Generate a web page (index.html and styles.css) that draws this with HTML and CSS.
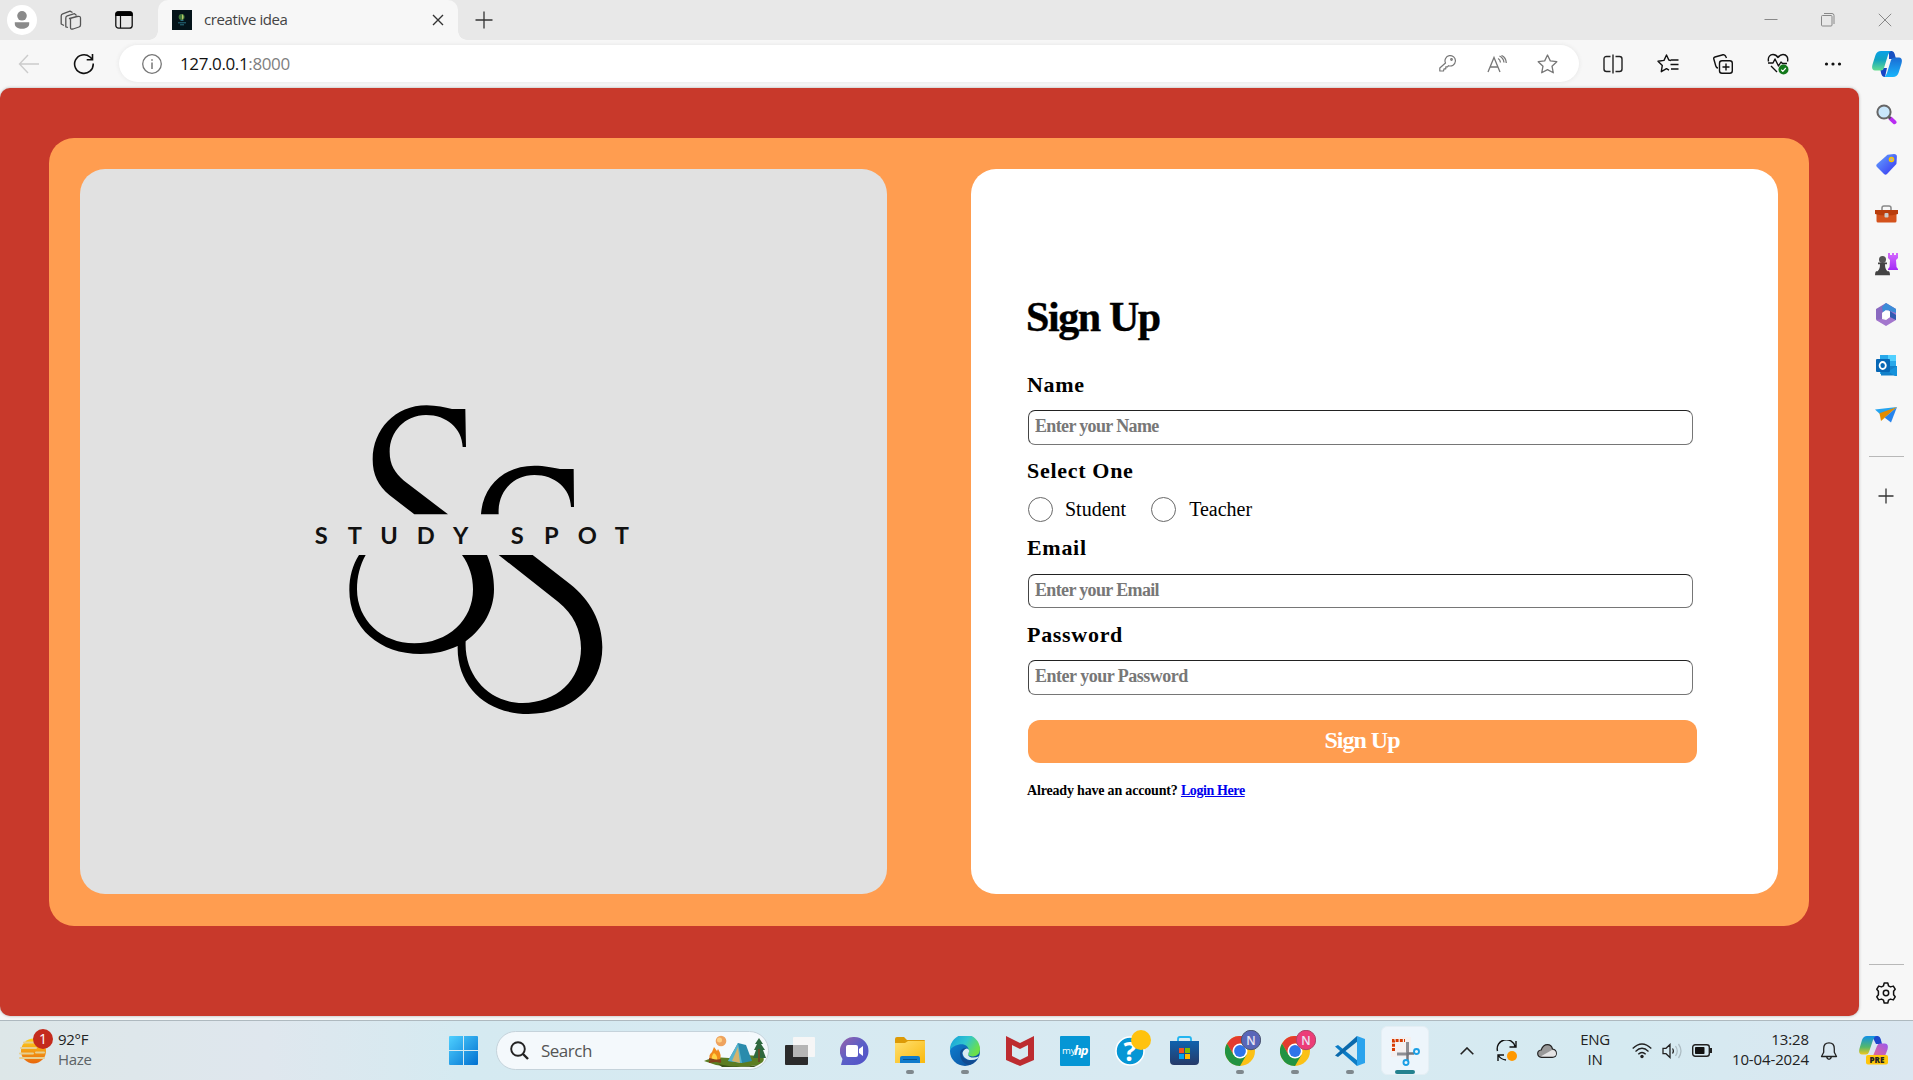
FILE: index.html
```html
<!DOCTYPE html>
<html lang="en">
<head>
<meta charset="utf-8">
<title>creative idea</title>
<link rel="stylesheet" href="styles.css">
</head>
<body>
<svg class="defs" width="0" height="0" aria-hidden="true">
  <defs>
    <linearGradient id="gWin" x1="0" y1="0" x2="1" y2="1"><stop offset="0" stop-color="#4fd0ff"/><stop offset="1" stop-color="#0070d0"/></linearGradient>
    <linearGradient id="gTag" x1="0" y1="0" x2="1" y2="1"><stop offset="0" stop-color="#66a8ff"/><stop offset="1" stop-color="#3630f0"/></linearGradient>
    <linearGradient id="gBag" x1="0" y1="0" x2="0" y2="1"><stop offset="0" stop-color="#0f62ae"/><stop offset="1" stop-color="#263a68"/></linearGradient>
    <linearGradient id="gChat" x1="0" y1="0" x2="1" y2="1"><stop offset="0" stop-color="#9a62a8"/><stop offset=".5" stop-color="#5b5fc7"/><stop offset="1" stop-color="#5050c8"/></linearGradient>
    <linearGradient id="gFold" x1="0" y1="0" x2="1" y2="1"><stop offset="0" stop-color="#ffdf70"/><stop offset="1" stop-color="#fab90c"/></linearGradient>
    <linearGradient id="gEdgeTop" x1="0" y1="0" x2="1" y2=".5"><stop offset="0" stop-color="#139ddb"/><stop offset=".55" stop-color="#30c5cf"/><stop offset="1" stop-color="#6be04a"/></linearGradient>
    <linearGradient id="gEdge" x1="0" y1="0" x2="1" y2="1"><stop offset="0" stop-color="#0e86d8"/><stop offset="1" stop-color="#0c4a96"/></linearGradient>
    <linearGradient id="gHaze" x1="0" y1="0" x2="0" y2="1"><stop offset="0" stop-color="#ffd21a"/><stop offset="1" stop-color="#e8650c"/></linearGradient>
    <linearGradient id="gCopA" x1="0" y1="0" x2="0" y2="1"><stop offset="0" stop-color="#08a0e8"/><stop offset=".45" stop-color="#12a3c0"/><stop offset="1" stop-color="#65dd90"/></linearGradient>
    <linearGradient id="gCopB" x1="0" y1="0" x2="0" y2="1"><stop offset="0" stop-color="#1b6bd4"/><stop offset="1" stop-color="#18b5fb"/></linearGradient>
    <linearGradient id="gPreA" x1="0" y1="0" x2="0" y2="1"><stop offset="0" stop-color="#1090e8"/><stop offset=".6" stop-color="#55b86a"/><stop offset="1" stop-color="#f0c71c"/></linearGradient>
    <linearGradient id="gPreB" x1="1" y1="0" x2="0" y2="1"><stop offset="0" stop-color="#9958f0"/><stop offset="1" stop-color="#fa6b77"/></linearGradient>
    <linearGradient id="gRook" x1="0" y1="0" x2="0" y2="1"><stop offset="0" stop-color="#d56bff"/><stop offset="1" stop-color="#a32bf5"/></linearGradient>
    <symbol id="chrome" viewBox="0 0 30 30">
      <circle cx="15" cy="15" r="15" fill="#fbc116"/>
      <path d="M2 7.500A15 15 0 0 1 28 7.500H15L8.500 18.750Z" fill="#e33b2e"/>
      <path d="M2 7.500A15 15 0 0 0 15 30L21.500 18.750 15 15 8.500 18.750Z" fill="#229342"/>
      <circle cx="15" cy="15" r="7.500" fill="#fff"/><circle cx="15" cy="15" r="5.900" fill="#2f74ea"/>
    </symbol>
  </defs>
</svg>

<div class="screen">
  <header class="tabstrip">
    <div class="slot avatar-slot"><svg width="30" height="30" viewBox="0 0 30 30"><circle cx="15" cy="15" r="15" fill="#fff"/><circle cx="15" cy="10.800" r="4.800" fill="#8a8a8a"/><path d="M7.800 17.300h14.400v1.500c0 3.400-3.400 5-7.200 5s-7.200-1.600-7.200-5z" fill="#8a8a8a"/></svg></div>
    <div class="slot spaces"><svg width="22" height="20" viewBox="0 0 22 20" fill="none" stroke="#555" stroke-width="1.300" stroke-linejoin="round"><path d="M9.500 8.500 17 6.500q3.500-.8 3.500 1.500V15q0 1.500-1.500 2l-6 2q-2.500.700-2.500-1.500V9.500q0-1 .8-1.400z"/><path d="M8 17.500 5.800 16.800V8q0-1.600 1.500-2.200L14.500 3.600 16.500 5.500"/><path d="M4 15.500 1.200 14V6q0-1.600 1.500-2.200L10 1.200 12.500 2.500"/></svg></div>
    <div class="slot"><svg width="18" height="18" viewBox="0 0 18 18"><rect x=".8" y=".8" width="16.400" height="16.400" rx="2.800" fill="none" stroke="#111" stroke-width="1.300"/><path d="M.3 5V3q0-2.700 2.700-2.700h12q2.700 0 2.700 2.700v2z" fill="#000"/><path d="M5.500 5v12" stroke="#111" stroke-width="1.200"/></svg></div>
    <div class="tab">
      <svg width="20" height="20" viewBox="0 0 20 20"><path fill="#04141a" d="M0 0h20v20H0z"/><circle cx="9.600" cy="7" r="3" fill="#41793d"/><path d="M10 4q3 3 0 6z" fill="#bcc96a"/><path d="M8.500 10.500h3M6 12.800h8M8 14.800h4" stroke="#287082"/></svg>
      <span class="tab-title">creative idea</span>
      <svg width="12" height="12" viewBox="0 0 12 12" stroke="#333" stroke-width="1.400"><path d="m1 1 10 10M11 1 1 11"/></svg>
    </div>
    <div class="slot newtab"><svg width="18" height="18" viewBox="0 0 18 18" stroke="#333" stroke-width="1.300"><path d="M9 .5v17M.5 9h17"/></svg></div>
    <div class="winbtns">
      <svg width="14" height="14" viewBox="0 0 14 14" stroke="#888" fill="none"><path d="M.5 6.500h13"/></svg>
      <svg width="14" height="14" viewBox="0 0 14 14" stroke="#888" fill="none"><rect x=".5" y="2.500" width="10.500" height="10.500" rx="1"/><path d="M3 .5h8q2 0 2 2v8.500"/></svg>
      <svg width="14" height="14" viewBox="0 0 14 14" stroke="#888" fill="none"><path d="m.8.800 12.400 12.400M13.200.8.800 13.200"/></svg>
    </div>
  </header>

  <nav class="toolbar">
    <div class="nav-slot"><svg width="22" height="20" viewBox="0 0 22 20" fill="none" stroke="#ccc" stroke-width="1.400"><path d="M21 10H1.500M10 1 1.500 10 10 19"/></svg></div>
    <div class="nav-slot reload"><svg width="22" height="22" viewBox="0 0 22 22" fill="none" stroke="#111" stroke-width="1.600"><path d="M20.200 10.500A9.300 9.300 0 1 1 17 4l2.500 2.500M19.500 1v5.700h-5.800"/></svg></div>
    <div class="address">
      <svg width="20" height="20" viewBox="0 0 20 20" fill="none" stroke="#767676"><circle cx="10" cy="10" r="9.300" stroke-width="1.300"/><path d="M10 8.500V15" stroke-width="1.500"/><circle cx="10" cy="6" r=".5"/></svg>
      <span class="url">127.0.0.1<span>:8000</span></span>
      <div class="addr-icons">
        <svg width="17" height="17" viewBox="0 0 17 17" fill="none" stroke="#777" stroke-width="1.200" stroke-linejoin="round"><path d="M6.500 8A5.200 5.200 0 1 1 9.500 10.700L8.500 11.800H6.800v2H5L4.500 16H.8v-3z"/><circle cx="12.500" cy="4.500" r=".8"/></svg>
        <svg width="20" height="18" viewBox="0 0 20 18" fill="none" stroke="#777" stroke-width="1.300"><path d="M1 17 7 2.500 13 17M3.200 12h7.600M11 3.500q2.200 1 2.500 4M12.500 1Q16.500 3 17 7.500M14.500.5Q19 2.500 19.300 8"/></svg>
        <svg width="21" height="20" viewBox="0 0 21 20" fill="none" stroke="#777" stroke-width="1.300" stroke-linejoin="round"><path d="m10.500 1 2.800 5.900 6.500.8-4.800 4.500 1.300 6.600-5.800-3.200-5.800 3.200L6 12.200 1.200 7.700l6.500-.8z"/></svg>
      </div>
    </div>
    <div class="actions">
      <svg width="20" height="20" viewBox="0 0 20 20" fill="none" stroke="#222" stroke-width="1.400"><path d="M10 .5v19M7.500 2.500h-4Q1 2.500 1 5v10q0 2.500 2.500 2.500h4M12.500 2.500h4Q19 2.500 19 5v10q0 2.500-2.500 2.500h-4"/></svg>
      <svg width="22" height="20" viewBox="0 0 22 20" fill="none" stroke="#111" stroke-width="1.400" stroke-linejoin="round"><path d="M14 6.500 11.800 6 9.500 1 7 6.400 1 7.200l4.300 4.200-1 6.300 5.200-3 2.500 1.400M14 6h7.500M13.500 10.500h8M14 15h7.500" /></svg>
      <svg width="20" height="20" viewBox="0 0 20 20" fill="none" stroke="#111" stroke-width="1.400"><rect x="6.500" y="6.700" width="12.800" height="12.500" rx="2.500"/><path d="M13 9.500v7M9.500 13h7M13.500 4 12.500 2Q11.500.5 10 .8L2 3Q.4 3.500.8 5l2 7q.6 2 2.200 2"/></svg>
      <svg width="22" height="22" viewBox="0 0 22 22" fill="none" stroke="#111" stroke-width="1.400" stroke-linejoin="round"><path d="M1.500 8.500C.5 3.500 3.500 1.500 6 1.500q3 0 5 3 2-3 5-3c3.500 0 5.500 3 4.500 7M1 10h5l2-4 3.500 7 2.500-4 1.500 1.500H20M4 13l6 6"/><circle cx="16.500" cy="16.500" r="5" fill="#13791b" stroke="none"/><path d="m14.200 16.700 1.600 1.600 3-3.300" stroke="#fff" stroke-width="1.200"/></svg>
      <svg width="18" height="6" viewBox="0 0 18 6" fill="#111"><circle cx="2.500" cy="3" r="1.600"/><circle cx="9" cy="3" r="1.600"/><circle cx="15.500" cy="3" r="1.600"/></svg>
    </div>
    <div class="copilot"><svg width="30" height="26" viewBox="0 0 30 26"><path d="M17 0h3q2 .3 2.700 3L24 8h-7z" fill="#174fc1"/><path d="M8 17h7l-2 9h-1q-2-.5-2.700-3z" fill="#1744c5"/><path d="M9 0h10q-2 .8-3 4l-4 13q-.8 2.500-3 2.500H3Q-1 19 .5 13.500L3.500 4Q5 0 9 0z" fill="url(#gCopA)"/><path d="M21 26H12q2-1 3-4l4-13q.8-2.500 3-2.500h5q4 .5 2.500 6L26.500 22Q25 26 21 26z" fill="url(#gCopB)"/></svg></div>
  </nav>

  <div class="viewport">
    <main class="page">
      <section class="card">
        <div class="brand">
          <svg width="350" height="340" viewBox="0 0 1050 1020">
            <path d="M343 373 268 315C235 288 218 255 218 208C218 120 285 46 380 46C410 46 435 53 456 57H496L498 171H488C486 115 440 75 378 75C315 75 269 125 269 185C269 225 285 248 312 272L444 373Z"/>
            <path d="M543 373C548 290 610 227 703 227C735 227 760 233 780 237H821L822 351H813C811 295 765 255 703 255C640 255 592 305 596 373Z"/>
            <path d="M177 495H197C180 525 171 560 171 598C171 690 245 760 343 760C445 760 519 690 519 598C519 560 508 525 486 495H561C575 530 582 560 582 598C582 660 550 715 497 754C492 860 570 939 668 939C770 939 843 870 843 775C843 720 820 672 775 636L596 495H698L810 582C870 630 907 695 907 772C907 890 810 972 685 972C560 972 470 890 473 768C440 783 405 792 362 792C240 792 148 715 148 600C148 560 158 525 177 495Z"/>
            <text class="brand-text" y="462" x="44 143 241 350 459 632 732 833 944"><tspan>STUDY</tspan></text>
            <text class="brand-text" y="462" x="632 732 833 944">SPOT</text>
          </svg>
        </div>
        <form class="signup">
          <h1>Sign Up</h1>
          <label class="field-label" for="name">Name</label>
          <input class="field" id="name" placeholder="Enter your Name">
          <span class="field-label">Select One</span>
          <div class="radios">
            <label><input type="radio" name="role"><span>Student</span></label>
            <label><input type="radio" name="role"><span>Teacher</span></label>
          </div>
          <label class="field-label" for="email">Email</label>
          <input class="field field-email" id="email" placeholder="Enter your Email">
          <label class="field-label" for="password">Password</label>
          <input class="field field-password" id="password" type="password" placeholder="Enter your Password">
          <button class="submit" type="button">Sign Up</button>
          <p class="login">Already have an account? <a href="#">Login Here</a></p>
        </form>
      </section>
    </main>
    <aside class="sidebar">
      <div class="side-icon"><svg width="21" height="21" viewBox="0 0 21 21"><path d="m14.500 14.500 4 3.700" stroke="#b92cf2" stroke-width="4" stroke-linecap="round"/><path d="m12.500 12.500 2 2" stroke="#555" stroke-width="2.500"/><circle cx="8" cy="8" r="6.600" fill="#c8e6fb" stroke="#666" stroke-width="2"/></svg></div>
      <div class="side-icon"><svg width="21" height="21" viewBox="0 0 21 21"><path d="M11.500.8 18 0q3 0 2.900 3l-.5 7L11 20q-1.500 1.300-3 0L1 13q-1.500-1.500 0-3z" fill="url(#gTag)"/><circle cx="15.500" cy="5.500" r="2" fill="#aac" stroke="#f9c600" stroke-width="1.600"/></svg></div>
      <div class="side-icon"><svg width="23" height="18" viewBox="0 0 23 18"><path d="M7 5V3q0-2 2-2h5q2 0 2 2v2" fill="none" stroke="#888" stroke-width="1.500"/><rect x="1.500" y="6" width="20" height="11.500" rx="1.500" fill="#d4521c"/><path d="M0 5h23v4q-11.500 3-23 0z" fill="#b93d0c"/><rect x="9.500" y="8" width="4" height="4.500" rx="1" fill="#ccc"/></svg></div>
      <div class="side-icon"><svg width="23" height="23" viewBox="0 0 23 23"><path d="M13 0h2v2h2V0h2v2h2V0h2v5l-2 2 .5 7 1.500 2v1H13v-1l1.500-2 .5-7-2-2z" fill="url(#gRook)"/><circle cx="7.500" cy="6.500" r="3.500" fill="#555"/><path d="M3 9.500h9v1.800h-2q0 5 2.500 7H14q1 1 1 4H0q0-3 1-4h1.500q2.500-2 2.500-7H3z" fill="#444"/></svg></div>
      <div class="side-icon"><svg width="22" height="23" viewBox="0 0 22 23"><path d="m11 0 10 6v6l-8-5-6 3v10l-6-3.500V6z" fill="#8a6ac0"/><path d="m11 0 10 6v6l-8-5-5 2.500L7 4z" fill="#3b8cd8"/><path d="M21 10v7l-10 6-10-6 6-1 4 1 4-3V8z" fill="#a376cd"/><path d="m15 8 6 4v5l-6-3z" fill="#325bb1"/><path d="m11 7 4 2.500v4.500l-4 2.500L7.500 14V9.500z" fill="#fff"/></svg></div>
      <div class="side-icon"><svg width="21" height="21" viewBox="0 0 21 21"><path d="M4 0h16v19H4z" fill="#28a8ea"/><path d="M12 0h8v6h-8z" fill="#51d0ff"/><path d="M5 11h16v9.500H5z" fill="#1380c9"/><path d="m21 11-9 5.500L19 21h2z" fill="#1592dc"/><rect y="4" width="14" height="13" rx="1" fill="#0767b5"/><ellipse cx="6.700" cy="10.500" rx="3.100" ry="3.500" fill="none" stroke="#fff" stroke-width="1.800"/></svg></div>
      <div class="side-icon"><svg width="22" height="16" viewBox="0 0 22 16"><path d="M22 0 0 2.500 6 8z" fill="#25a4f0"/><path d="M22 0 4.500 6.200 6 14z" fill="#e28b00"/><path d="m22 0-6 15.500-6.500-5z" fill="#2583ed"/><path d="m22 0-16 14 3.500-3.500z" fill="#ffb829"/></svg></div>
      <hr class="side-rule">
      <div class="side-plus"><svg width="16" height="16" viewBox="0 0 16 16" stroke="#333" stroke-width="1.300"><path d="M8 .5v15M.5 8h15"/></svg></div>
      <hr class="side-rule side-rule-bottom">
      <div class="side-gear"><svg width="22" height="22" viewBox="0 0 22 22" fill="none" stroke="#111" stroke-width="1.500" stroke-linejoin="round"><path d="M9.200 1h3.600l.7 2.800 2 1.100 2.800-.8 1.900 3.100-1.600 2.100v3.400l1.600 2.100-1.900 3.100-2.800-.8-2 1.100-.7 2.800H9.200l-.7-2.800-2-1.100-2.800.8-1.900-3.100 1.600-2.100V9.300L1.800 7.200l1.900-3.100 2.800.8 2-1.100z"/><circle cx="11" cy="11" r="2.700"/></svg></div>
    </aside>
  </div>

  <footer class="taskbar">
    <div class="weather">
      <svg width="36" height="36" viewBox="0 0 36 36"><circle cx="16.500" cy="22" r="12.500" fill="url(#gHaze)"/><path d="M7 13.500h11M4 19h15M3 24.500h13M3 29h24M19 23.500h8" stroke="#e6cf90" stroke-width="2" stroke-linecap="round"/><circle cx="26" cy="10" r="10" fill="#c42b1c"/><text x="26" y="15" class="badge-text">1</text></svg>
      <div class="weather-text"><span>92°F</span><span class="muted">Haze</span></div>
    </div>
    <svg class="start" width="29" height="29" viewBox="0 0 29 29"><path d="M0 1q0-1 1-1h13v14H0zM15 0h13q1 0 1 1v13H15zM0 15h14v14H1q-1 0-1-1zM15 15h14v13q0 1-1 1H15z" fill="url(#gWin)"/></svg>
    <div class="search">
      <svg width="19" height="19" viewBox="0 0 19 19" fill="none" stroke="#222"><circle cx="8" cy="8" r="6.800" stroke-width="1.900"/><path d="m13 13 5 5" stroke-width="2.400"/></svg>
      <span>Search</span>
      <svg class="camp" width="62" height="32" viewBox="0 0 62 32"><path d="M0 26q10-5 25-3 18-5 34-1 3 4-5 8-22 4-42 0z" fill="#5c7d22"/><path d="M14 29q20 5 40 1l-4 2H18z" fill="#3c5418"/><circle cx="17" cy="6" r="5.300" fill="#eea35e"/><circle cx="15.500" cy="5" r="2.500" fill="#ffd084"/><path d="m10 12 3 4 1-2q4 6 2 11H6q-2-5 2-8z" fill="#f18b1c"/><path d="M10 18q4 3 3 7H8q-1-4 2-7z" fill="#ffd243"/><path d="m5 27 12-2M5 24l12 3" stroke="#84401a" stroke-width="2"/><path d="M24 26 34 8l8 2 6 16-10 2z" fill="#2a8bac"/><path d="M24 26 34 8l4 20z" fill="#57b4ce"/><path d="m34 12 2 16-8-2z" fill="#d6b46a"/><path d="m55 3 4 6h-2l4 6h-2l3 8H49l3-8h-2l3-6h-2z" fill="#2f683e"/><path d="M55 14v13" stroke="#6b4a25" stroke-width="2"/></svg>
    </div>
    <div class="apps">
      <div class="app"><svg width="30" height="28" viewBox="0 0 30 28"><rect y="8" width="23" height="20" rx="1" fill="#2b2b2b"/><rect x="8" width="22" height="20" rx="1" fill="#f6f6f6"/><path d="M8 8h15v12H8z" fill="#b5b5b5"/></svg></div>
      <div class="app"><svg width="29" height="28" viewBox="0 0 29 28"><path d="M14.500 0a14 14 0 1 1 0 28H1l1.500-6A14 14 0 0 1 14.500 0z" fill="url(#gChat)"/><rect x="6" y="8" width="12" height="12" rx="2" fill="#fff"/><path d="m19 12 4-3v10l-4-3z" fill="#fff"/></svg></div>
      <div class="app run"><svg width="30" height="27" viewBox="0 0 30 27"><path d="M0 2q0-2 2-2h7l3 3h17q1 0 1 1v4H0z" fill="#dd9a06"/><path d="M0 6h10l3-2h17v22H0z" fill="url(#gFold)"/><path d="M5 26v-5q0-2 2-2h16q2 0 2 2v5z" fill="#107bcc"/><path d="M8 22.500h14" stroke="#07528d"/></svg></div>
      <div class="app run"><svg width="30" height="30" viewBox="0 0 30 30"><circle cx="15" cy="15" r="15" fill="url(#gEdge)"/><path d="M0 14A15 15 0 0 1 30 13q0 7-7 7.500c-4 0-6-1.500-4.500-3.500C20 11 15 7 9 8.500 4 9.500 1 12 0 14z" fill="url(#gEdgeTop)"/><path d="M10 17q0 9 8 12 6-1 10-6.500-7 4-12 1-4-2-4-6 1-4 5-5-6-1-7 4.500z" fill="#114b91"/><path d="M12.500 17q1-4 4.500-4.500 3.500 1.500 1.500 4.500-1.500 3 3 4.500 4 .500 7.500-1.200-.5 1.500-1.500 2.200-5 2.500-10 1-4.500-2-5-6.500z" fill="#d8eaf2"/></svg></div>
      <div class="app"><svg width="28" height="30" viewBox="0 0 28 30"><path d="m0 0 14 7L28 0v24l-14 6-14-6zm6 9v11l8 4 8-4V9l-8 4z" fill="#bd2c30" fill-rule="evenodd"/></svg></div>
      <div class="app"><svg width="30" height="30" viewBox="0 0 30 30"><rect width="30" height="30" rx="1" fill="#0596d5"/><text x="2" y="18" class="hp-my">my</text><text x="14" y="19" class="hp-hp">hp</text></svg></div>
      <div class="app"><svg class="help" width="36" height="36" viewBox="0 0 36 36"><circle cx="15" cy="21" r="14" fill="#0596d5" stroke="#fff" stroke-width="1.500"/><text x="15" y="31" class="help-q">?</text><circle cx="26" cy="10" r="10" fill="#ffc20e"/></svg></div>
      <div class="app"><svg width="29" height="29" viewBox="0 0 29 29"><path d="M8 6V3q0-2 2-2h9q2 0 2 2v3" fill="none" stroke="#22b5f0" stroke-width="1.800"/><path d="M0 5h29v20q0 4-4 4H4q-4 0-4-4z" fill="url(#gBag)"/><path fill="#f25022" d="M9 12h5v5H9z"/><path fill="#7fba00" d="M15 12h5v5h-5z"/><path fill="#00a4ef" d="M9 18h5v5H9z"/><path fill="#ffb900" d="M15 18h5v5h-5z"/></svg></div>
      <div class="app run"><svg class="lifted" width="36" height="36" viewBox="0 0 36 36"><use href="#chrome" x="0" y="6" width="30" height="30"/><circle cx="26" cy="10" r="9.700" fill="#5966b8" stroke="#4b5470"/><text x="26" y="14.500" class="profile">N</text></svg></div>
      <div class="app run"><svg class="lifted" width="36" height="36" viewBox="0 0 36 36"><use href="#chrome" x="0" y="6" width="30" height="30"/><circle cx="26" cy="10" r="9.700" fill="#ec3d78" stroke="#ab4666"/><text x="26" y="14.500" class="profile">N</text></svg></div>
      <div class="app run"><svg width="30" height="30" viewBox="0 0 30 30"><path d="M0 10.500 3 9l20 16-1 5z" fill="#0b7cc6"/><path d="M0 19.500 3 21 23 5l-1-5z" fill="#0a69ac"/><path d="m22 0 8 3v24l-8 3z" fill="#2aa3ed"/></svg></div>
      <div class="app active"><svg width="36" height="32" viewBox="0 0 36 32"><rect width="20" height="20" x="4" y="2" fill="#f4f0f0"/><path d="M6.500 16V5.500H18" fill="none" stroke="#d83b01" stroke-width="3" stroke-dasharray="3 1.200"/><path d="M20.500 7v12H10" fill="none" stroke="#8e8e93" stroke-width="3"/><path d="M20.500 18v7M20 18.500h7" stroke="#77777d" stroke-width="2.500"/><circle cx="19" cy="27.500" r="2.500" fill="none" stroke="#1c9fe5" stroke-width="1.900"/><circle cx="29.500" cy="16.500" r="2.500" fill="none" stroke="#1c9fe5" stroke-width="1.900"/></svg></div>
    </div>
    <div class="tray">
      <div class="tray-icon"><svg width="14" height="8" viewBox="0 0 14 8" fill="none" stroke="#222" stroke-width="1.600"><path d="m.7 7.300L7 1l6.300 6.300"/></svg></div>
      <div class="tray-icon"><svg width="22" height="22" viewBox="0 0 22 22" fill="none" stroke="#111" stroke-width="1.400"><path d="M1.500 11A9 9 0 0 1 19 6.500M20 1v6h-6.500M10 20Q5 19.500 2.500 15.500M2 21v-6h6"/><circle cx="16" cy="16" r="5" fill="#ff9800" stroke="none"/></svg></div>
      <div class="tray-icon"><svg width="20" height="14" viewBox="0 0 20 14"><path d="M4.500 13.300Q.7 13 .7 9.500q0-3 3.500-3.500Q6 .7 10.500.7q4 0 5 4.300 3.800.5 3.800 4.300 0 4-4 4z" fill="#999" stroke="#222" stroke-width="1.200"/><path d="m4 12.300 11-6.300q4 0 4 4 0 2-3 2.500H5z" fill="#e4e4e4"/></svg></div>
      <div class="lang"><span>ENG</span><span>IN</span></div>
      <div class="net">
        <svg width="20" height="16" viewBox="0 0 20 16" fill="none" stroke="#222" stroke-width="1.300"><path d="M.7 5.500q9.300-9 18.600 0M3.500 8.500q6.500-6.500 13 0M6.300 11.300q3.700-3.700 7.400 0"/><circle cx="10" cy="13.500" r="1.700" fill="#222" stroke="none"/></svg>
        <svg width="20" height="16" viewBox="0 0 20 16" fill="none" stroke="#222" stroke-width="1.300"><path d="M1 5.300h3L8 1.500v13L4 10.700H1zM10.500 5.500q1.700 2.500 0 5"/><path d="M13.500 3q3.500 5 0 10M16.500 1q5 7 0 14" stroke="#aebdc4"/></svg>
        <svg width="20" height="13" viewBox="0 0 20 13"><rect x=".7" y=".7" width="16.600" height="11.600" rx="2.500" fill="none" stroke="#222" stroke-width="1.400"/><rect x="3" y="3" width="9.500" height="7" rx=".8" fill="#111"/><path d="M18 4h2v5h-2z" fill="#222"/></svg>
      </div>
      <div class="clock"><span>13:28</span><span>10-04-2024</span></div>
      <div class="bell"><svg width="18" height="18" viewBox="0 0 18 18" fill="none" stroke="#222" stroke-width="1.300" stroke-linejoin="round"><path d="M9 .8q5.300 0 5.300 6v3.500L16.500 14.500h-15L3.700 10.300V6.800q0-6 5.300-6zM6.700 15q.5 2.300 2.300 2.300t2.300-2.300"/></svg></div>
      <div class="pre"><svg width="30" height="29" viewBox="0 0 30 29"><path d="M13 0h6q2 .3 2.700 3L23 8h-6z" fill="#1c48cc"/><path d="M8 0h9q-2 .8-3 4l-4 12q-.8 2.500-3 2.500H3Q-1 18 .5 12.500L3 4Q4.500 0 8 0z" fill="url(#gPreA)"/><path d="M20 24H11q2-1 3-4l4-10q.8-2.500 3-2.500h5q4 .5 2.500 6L26 20z" fill="url(#gPreB)"/><rect x="7" y="19" width="22" height="9.500" rx="2" fill="#ffc60a"/><text x="18" y="26.500" class="pre-text">PRE</text></svg></div>
    </div>
  </footer>
</div>
</body>
</html>
```
FILE: styles.css
```css
* { box-sizing: border-box; }
html, body { margin: 0; height: 100%; overflow: hidden; }
body { font-family: "Open Sans", "Noto Sans", sans-serif; background: #f7f7f7; }
svg { display: block; flex: none; }
.defs { position: absolute; }
.screen { width: 1913px; height: 1080px; display: flex; flex-direction: column; }

/* Tab strip */
.tabstrip { height: 40px; flex: none; display: flex; align-items: center; background: #e8e8e8; }
.slot { width: 53px; height: 40px; display: flex; align-items: center; justify-content: center; }
.avatar-slot { width: 44px; }
.spaces { padding-left: 1px; }
.tab { position: relative; width: 300px; height: 40px; margin-left: 8px; padding: 0 14px; display: flex; align-items: center; background: #f7f7f7; border-radius: 10px 10px 0 0; }
.tab::before, .tab::after { content: ""; position: absolute; bottom: 0; width: 9px; height: 9px; }
.tab::before { left: -9px; background: radial-gradient(circle at 0 0, #e8e8e8 8.5px, #f7f7f7 9px); }
.tab::after { right: -9px; background: radial-gradient(circle at 100% 0, #e8e8e8 8.5px, #f7f7f7 9px); }
.tab-title { flex: 1; margin: -2px 0 0 12px; font-size: 15px; letter-spacing: -0.4px; color: #444; }
.newtab { width: 52px; }
.winbtns { margin-left: auto; display: flex; gap: 43px; padding-right: 21px; }

/* Toolbar */
.toolbar { height: 48px; flex: none; display: flex; align-items: center; padding-bottom: 1px; background: #f7f7f7; }
.nav-slot { width: 58px; display: flex; justify-content: center; }
.reload { width: 52px; }
.address { width: 1460px; height: 37px; margin-left: 9px; padding: 0 7px 0 23px; display: flex; align-items: center; background: #fff; border-radius: 19px; box-shadow: 0 0 4px #e4e4e4; }
.url { margin: -1px 0 0 18px; font-size: 17px; letter-spacing: -0.38px; color: #111; }
.url span { color: #808080; }
.addr-icons { margin-left: auto; display: grid; grid-template-columns: repeat(3, 50px); justify-items: center; align-items: center; }
.actions { margin-left: 6px; display: grid; grid-template-columns: repeat(5, 55px); justify-items: center; align-items: center; }
.copilot { flex: 1; display: flex; justify-content: center; }

/* Page */
.viewport { height: 932px; flex: none; display: flex; background: #f7f7f7; }
.page { width: 1859px; height: 928px; padding: 50px 50px 0 49px; background: #c8392b; border-radius: 10px; box-shadow: 0 0 3px #aaa; }
.card { height: 788px; padding: 31px; display: flex; justify-content: space-between; background: #ff9d50; border-radius: 25px; }
.brand { width: 807px; height: 725px; padding: 221px 0 0 220px; background: #e1e1e1; border-radius: 25px; }
.brand-text { font: bold 71px Lato, "Open Sans", sans-serif; fill: #111; }
.signup { width: 807px; height: 725px; padding: 126px 0 0 57px; display: flex; flex-direction: column; align-items: flex-start; background: #fff; border-radius: 25px; font-family: "Liberation Serif", serif; color: #000; }
.signup h1 { margin: -1px 0 32px -2px; font-size: 42px; line-height: 46px; letter-spacing: -1.4px; -webkit-text-stroke: 0.4px #000; }
.field-label { margin-left: -1px; font-size: 22px; line-height: 26px; font-weight: bold; letter-spacing: 0.7px; }
.field { width: 665px; height: 35px; margin: 12px 0 13px; padding: 0 6px 2px; border: 1px solid #767676; border-top-color: #222; border-left-color: #444; border-radius: 7px; font: bold 18px "Liberation Serif", serif; letter-spacing: -0.65px; background: #fff; }
.field::placeholder { color: #777; opacity: 1; }
.field-email { height: 34px; margin: 13px 0 14px; }
.field-password { letter-spacing: -0.5px; }
.radios { height: 25px; margin: 13px 0; display: flex; gap: 25px; font-size: 20px; }
.radios label { display: flex; align-items: center; gap: 12px; }
.radios input { appearance: none; width: 25px; height: 25px; margin: 0; border: 1.5px solid #686868; border-radius: 50%; }
.radios label + label { gap: 13px; }
.submit { width: 669px; height: 43px; margin: 12px 0 19px; padding: 0 1px 2px 0; border: 0; border-radius: 12px; background: #ff9d50; color: #fff; font: bold 24px "Liberation Serif", serif; letter-spacing: -1px; }
.login { margin: 0 0 0 -1px; font-size: 14px; line-height: 18px; font-weight: bold; letter-spacing: -0.18px; }
.login a { color: #00e; letter-spacing: -0.4px; }

/* Browser sidebar */
.sidebar { width: 54px; padding-top: 1px; display: flex; flex-direction: column; align-items: center; }
.side-icon { height: 50.2px; display: flex; align-items: center; }
.side-rule { width: 35px; height: 1px; margin: 16px 0 0; border: 0; background: #b8b8b8; }
.side-plus { margin-top: 31px; }
.side-rule-bottom { margin-top: auto; }
.side-gear { padding: 17px 0 16px; }

/* Taskbar */
.taskbar { height: 60px; flex: none; display: flex; align-items: center; border-top: 1px solid #aeb9bf; background: linear-gradient(90deg, #dde7e8, #dfe7ee 14%, #d5eaf1 24%, #d8eaf2 60%, #d5eaf1 85%, #dbe7f1); font-size: 15px; color: #222; }
.weather { width: 449px; display: flex; padding-left: 17px; gap: 5px; }
.weather svg { margin-top: -3px; }
.weather-text, .lang, .clock { display: flex; flex-direction: column; margin-top: -3px; line-height: 20px; letter-spacing: -0.3px; }
.muted { color: #5c6366; }
.badge-text { font-size: 14px; fill: #fff; text-anchor: middle; }
.search { width: 273px; height: 39px; margin-left: 18px; padding: 0 2px 0 13px; display: flex; align-items: center; border: 1px solid #c5d3db; border-radius: 20px; background: #f4f9fc; font-size: 17px; letter-spacing: -0.5px; color: #555; }
.search span { margin-left: 12px; }
.camp { margin-left: auto; }
.apps { margin-left: 3px; display: grid; grid-template-columns: repeat(12, 55px); }
.app { position: relative; height: 59px; display: flex; align-items: center; justify-content: center; }
.lifted, .help { margin: -6px 0 0 6px; }
.help { overflow: visible; }
.run::after, .active::after { content: ""; position: absolute; bottom: 6px; left: 23.5px; width: 8px; height: 4px; border-radius: 2px; background: #7f888d; }
.active { width: 48px; height: 49px; align-self: center; justify-self: center; border: 1px solid #e4eef4; border-radius: 6px; background: #edf5fb; }
.active::after { left: 13px; bottom: 0; width: 20px; background: #24818f; }
.hp-my { font: 9.5px "Open Sans", sans-serif; fill: #fff; }
.hp-hp { font: italic bold 13px "Open Sans", sans-serif; letter-spacing: -1px; fill: #fff; }
.help-q { font: bold 27px/1 "Open Sans", sans-serif; fill: #fff; text-anchor: middle; }
.profile { font-size: 12px; font-weight: 600; fill: #e8e4f4; text-anchor: middle; }
.tray { flex: 1; display: flex; align-items: center; margin-left: 15px; }
.tray-icon { width: 40px; display: flex; justify-content: center; }
.lang { width: 56px; align-items: center; }
.net { display: flex; align-items: center; gap: 10px; margin-left: 9px; }
.clock { width: 97px; align-items: flex-end; letter-spacing: -0.12px; }
.bell { width: 39px; display: flex; justify-content: center; }
.pre { margin-left: 11px; }
.pre-text { font-size: 8px; font-weight: 800; fill: #222; text-anchor: middle; }
```
